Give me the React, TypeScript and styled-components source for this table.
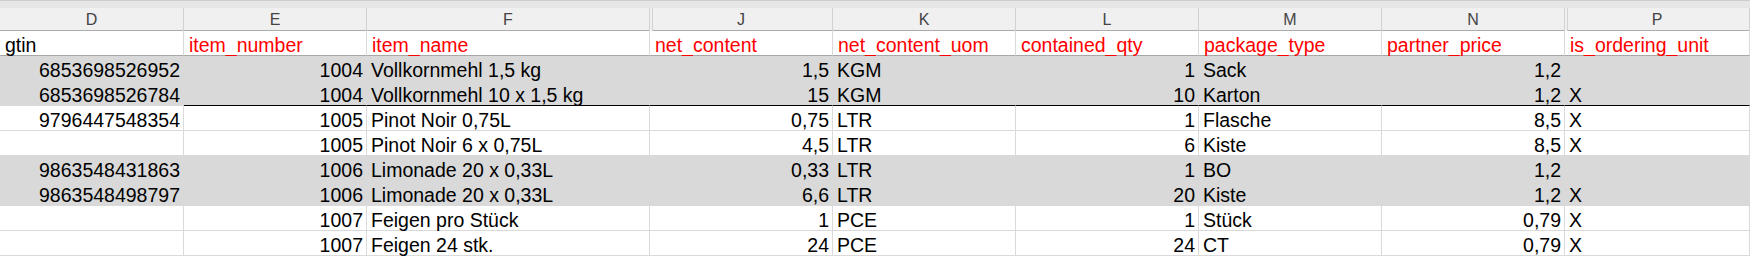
import * as React from 'react';
import styled, { createGlobalStyle } from 'styled-components';

type Align = 'left' | 'right';

type Row = {
    cells: string[];
    fill?: boolean;
    rule?: boolean;
}

const COLUMNS = '184px 183px 283px 183px 183px 183px 183px 183px 185px';
const LETTERS = ['D', 'E', 'F', 'J', 'K', 'L', 'M', 'N', 'P'];
// columns that come right after a hidden one (G-I and O are hidden)
const AFTER_HIDDEN = [3, 8];
const TITLES = ['gtin', 'item_number', 'item_name', 'net_content', 'net_content_uom', 'contained_qty', 'package_type', 'partner_price', 'is_ordering_unit'];
const ALIGN: Align[] = ['right', 'right', 'left', 'right', 'left', 'right', 'left', 'right', 'left'];

const rows: Row[] = [
    { cells: ['6853698526952', '1004', 'Vollkornmehl 1,5 kg', '1,5', 'KGM', '1', 'Sack', '1,2', ''], fill: true },
    { cells: ['6853698526784', '1004', 'Vollkornmehl 10 x 1,5 kg', '15', 'KGM', '10', 'Karton', '1,2', 'X'], fill: true, rule: true },
    { cells: ['9796447548354', '1005', 'Pinot Noir 0,75L', '0,75', 'LTR', '1', 'Flasche', '8,5', 'X'] },
    { cells: ['', '1005', 'Pinot Noir 6 x 0,75L', '4,5', 'LTR', '6', 'Kiste', '8,5', 'X'] },
    { cells: ['9863548431863', '1006', 'Limonade 20 x 0,33L', '0,33', 'LTR', '1', 'BO', '1,2', ''], fill: true },
    { cells: ['9863548498797', '1006', 'Limonade 20 x 0,33L', '6,6', 'LTR', '20', 'Kiste', '1,2', 'X'], fill: true },
    { cells: ['', '1007', 'Feigen pro Stück', '1', 'PCE', '1', 'Stück', '0,79', 'X'] },
    { cells: ['', '1007', 'Feigen 24 stk.', '24', 'PCE', '24', 'CT', '0,79', 'X'] },
];

const App = () => {
    return (
        <>
            <GlobalStyle />
            <Sheet>
                <TopStrip />
                <LetterRow>
                    {LETTERS.map((letter, i) =>
                        <Letter key={letter} $afterHidden={AFTER_HIDDEN.includes(i)}>
                            {letter}
                        </Letter>
                    )}
                </LetterRow>
                <GridRow>
                    {TITLES.map((title, i) =>
                        <Title key={title} $red={i > 0}>{title}</Title>
                    )}
                </GridRow>
                {rows.map((row, r) =>
                    <GridRow key={r}>
                        {row.cells.map((value, i) =>
                            <Cell
                                key={i}
                                $align={ALIGN[i]}
                                $fill={!!row.fill}
                                $rule={!!row.rule && i > 0}
                            >
                                {value}
                            </Cell>
                        )}
                    </GridRow>
                )}
            </Sheet>
        </>
    )
}

export default App

const GlobalStyle = createGlobalStyle`
  body {
    margin: 0;
    background: #ffffff;
    overflow: hidden;
  }
`;
const Sheet = styled.div`
  width: 1750px;
  font-family: "Liberation Sans", Arial, sans-serif;
  color: #000000;
`;
const TopStrip = styled.div`
  height: 8px;
  box-sizing: border-box;
  background: #e6e6e6;
  border-top: 1px solid #cdcdcd;
`;
const LetterRow = styled.div`
  display: grid;
  grid-template-columns: ${COLUMNS};
  height: 23px;
  background: #f0f0f0;
  border-bottom: 1px solid #ababab;
  box-sizing: border-box;
`;
const Letter = styled.div<{ $afterHidden: boolean }>`
  box-sizing: border-box;
  border-right: 1px solid #d2d2d2;
  box-shadow: ${p => p.$afterHidden ? 'inset 2px 0 #f0f0f0, inset 3px 0 #d2d2d2' : 'none'};
  text-align: center;
  font-size: 16px;
  line-height: 22px;
  padding-top: 1px;
  color: #444444;
`;
const GridRow = styled.div`
  display: grid;
  grid-template-columns: ${COLUMNS};
`;
const Title = styled.div<{ $red: boolean }>`
  box-sizing: border-box;
  height: 25px;
  padding: 2px 3px 0 5px;
  border-right: 1px solid #dadada;
  border-bottom: 1px solid #a8a8a8;
  font-size: 19.5px;
  line-height: 25px;
  white-space: nowrap;
  color: ${p => p.$red ? '#ff0000' : '#000000'};
`;
const Cell = styled.div<{ $align: Align; $fill: boolean; $rule: boolean }>`
  box-sizing: border-box;
  height: 25px;
  padding: 2px 3px 0 4px;
  background: ${p => p.$fill ? '#d9d9d9' : '#ffffff'};
  border-right: 1px solid ${p => p.$fill ? '#d9d9d9' : '#dadada'};
  border-bottom: 1px solid ${p => p.$rule ? '#000000' : p.$fill ? '#d9d9d9' : '#dadada'};
  text-align: ${p => p.$align};
  font-size: 19.5px;
  line-height: 25px;
  white-space: nowrap;
`;
